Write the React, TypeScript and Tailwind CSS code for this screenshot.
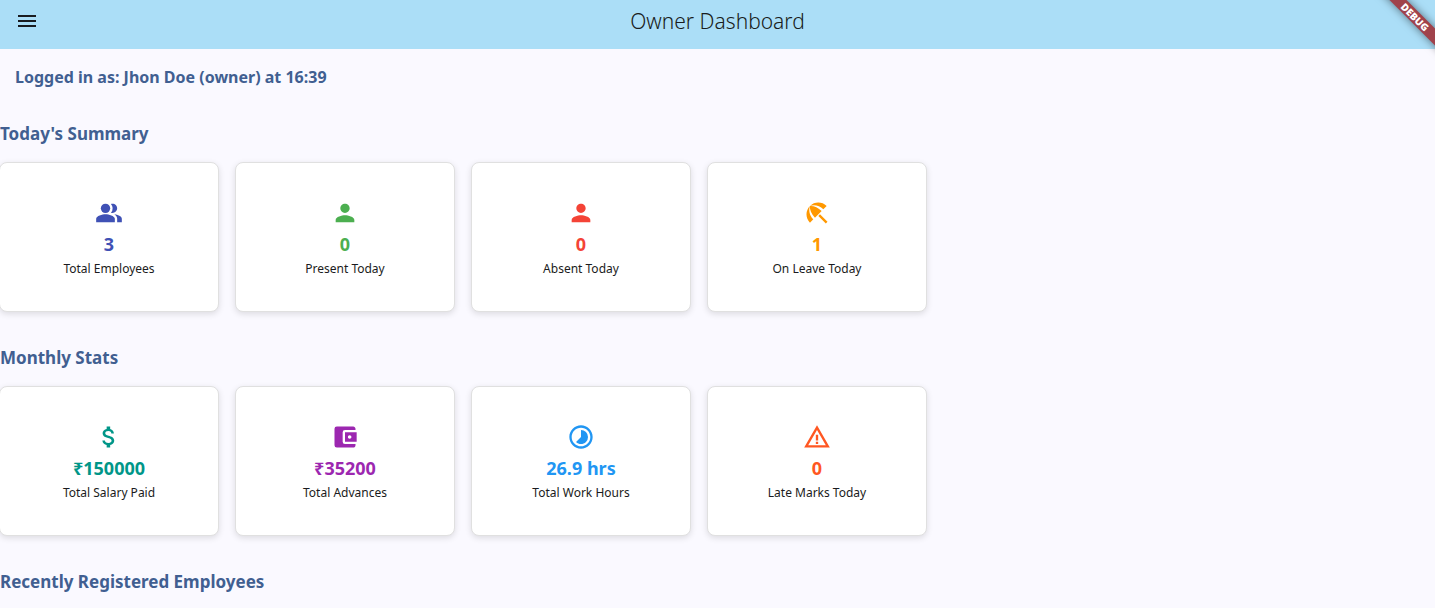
import type { IconType } from "react-icons";
import {
  MdAccountBalanceWallet,
  MdAttachMoney,
  MdBeachAccess,
  MdMenu,
  MdPeopleAlt,
  MdPerson,
  MdTimelapse,
  MdWarningAmber,
} from "react-icons/md";

type Stat = { icon: IconType; value: string; label: string; color: string };

const todayStats: Stat[] = [
  { icon: MdPeopleAlt, value: "3", label: "Total Employees", color: "text-[#3f51b5]" },
  { icon: MdPerson, value: "0", label: "Present Today", color: "text-[#4caf50]" },
  { icon: MdPerson, value: "0", label: "Absent Today", color: "text-[#f44336]" },
  { icon: MdBeachAccess, value: "1", label: "On Leave Today", color: "text-[#ff9800]" },
];

const monthlyStats: Stat[] = [
  { icon: MdAttachMoney, value: "₹150000", label: "Total Salary Paid", color: "text-[#009688]" },
  { icon: MdAccountBalanceWallet, value: "₹35200", label: "Total Advances", color: "text-[#9c27b0]" },
  { icon: MdTimelapse, value: "26.9 hrs", label: "Total Work Hours", color: "text-[#2196f3]" },
  { icon: MdWarningAmber, value: "0", label: "Late Marks Today", color: "text-[#ff5722]" },
];

function StatCard({ icon: Icon, value, label, color }: Stat) {
  return (
    <li className="flex h-[150px] w-[220px] flex-col items-center justify-center rounded-lg border border-[#e0e0e0] bg-white pt-0.5 shadow-[0_2px_6px_rgba(0,0,0,0.12)]">
      <Icon className={`size-7 ${color}`} aria-hidden="true" />
      <p className={`mt-1 text-lg leading-[26px] font-bold ${color}`}>{value}</p>
      <p className="mt-1 text-xs leading-4 text-[#1a1b20]">{label}</p>
    </li>
  );
}

function SectionTitle({ children }: { children: string }) {
  return <h2 className="text-[17px] leading-6 font-bold text-[#415f91]">{children}</h2>;
}

function StatSection({ title, stats }: { title: string; stats: Stat[] }) {
  return (
    <section className="flex flex-col gap-4">
      <SectionTitle>{title}</SectionTitle>
      <ul className="-ml-px flex flex-wrap gap-4">
        {stats.map((stat) => (
          <StatCard key={stat.label} {...stat} />
        ))}
      </ul>
    </section>
  );
}

function DebugRibbon() {
  return (
    <div className="pointer-events-none absolute top-0 right-0 size-16 overflow-hidden">
      <div className="absolute top-[11px] -right-7 w-24 rotate-45 bg-[#a0424b] text-center text-[10px] leading-3 font-black text-white shadow-[0_0_8px_rgba(0,0,0,0.5)]">
        DEBUG
      </div>
    </div>
  );
}

export default function App() {
  return (
    <div className="relative min-h-screen bg-[#faf9ff] font-['Segoe_UI','Noto_Sans',sans-serif]">
      <header className="grid h-[49px] grid-cols-[1fr_auto_1fr] items-center bg-[#abdef7] px-[15px] pb-[7px] text-[#191c20]">
        <button type="button" aria-label="Open menu" className="size-6 justify-self-start">
          <MdMenu className="size-6" aria-hidden="true" />
        </button>
        <h1 className="text-[21px] leading-8 font-light">Owner Dashboard</h1>
      </header>
      <DebugRibbon />
      <main className="pt-4">
        <p className="px-[15px] text-base leading-6 font-bold text-[#415f91]">
          Logged in as: Jhon Doe (owner) at 16:39
        </p>
        <div className="mt-[33px] flex flex-col gap-[34px]">
          <StatSection title="Today's Summary" stats={todayStats} />
          <StatSection title="Monthly Stats" stats={monthlyStats} />
          <SectionTitle>Recently Registered Employees</SectionTitle>
        </div>
      </main>
    </div>
  );
}
